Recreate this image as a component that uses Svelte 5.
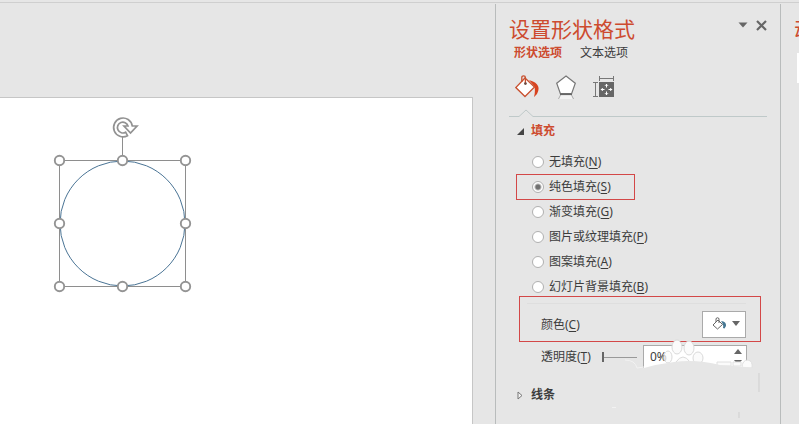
<script>
  const fills = [
    { id: 'none', name: '无填充', key: 'N' },
    { id: 'solid', name: '纯色填充', key: 'S' },
    { id: 'gradient', name: '渐变填充', key: 'G' },
    { id: 'picture', name: '图片或纹理填充', key: 'P' },
    { id: 'pattern', name: '图案填充', key: 'A' },
    { id: 'background', name: '幻灯片背景填充', key: 'B' }
  ];
  const handles = [[8, 42], [71, 42], [134, 42], [8, 105], [134, 105], [8, 168], [71, 168], [134, 168]];
  let fill = $state('solid');
  let transparency = $state(0);
</script>

<div class="app">
  <div class="ribbon-edge"></div>
  <main class="workspace">
    <div class="slide">
      <svg class="shape" width="144" height="178" viewBox="0 0 144 178" role="img" aria-label="椭圆">
        <circle cx="71.5" cy="105.5" r="62.5" fill="#fff" stroke="#4a7495" />
        <path d="M8.5 42.5H134.5V168.5H8.5ZM71.5 42V19" fill="none" stroke="#8e8e8e" />
        {#each handles as [x, y]}
          <circle cx={x + 0.5} cy={y + 0.5} r="4.7" fill="#fff" stroke="#949494" stroke-width="1.9" />
        {/each}
        <path d="M81.3 8A9.4 9.4 0 1 0 76.5 17.7L74.6 14.2A5.4 5.4 0 1 1 77 8H73L79.5 15L86 8Z" fill="#fff" stroke="#929292" stroke-width="1.7" />
      </svg>
    </div>
  </main>

  <aside class="panel">
    <header>
      <h1>设置形状格式</h1>
      <button class="plain" aria-label="任务窗格选项">
        <svg width="10" height="6" viewBox="0 0 10 6"><path d="M0.5 0.5H9.5L5 5.5Z" fill="#666" /></svg>
      </button>
      <button class="plain" aria-label="关闭">
        <svg width="11" height="11" viewBox="0 0 11 11"><path d="M1 1L10 10M10 1L1 10" stroke="#666" stroke-width="2.2" /></svg>
      </button>
    </header>
    <nav class="tabs">
      <button class="plain active">形状选项</button>
      <button class="plain">文本选项</button>
    </nav>
    <div class="categories">
      <button class="plain" aria-label="填充与线条">
        <svg width="24" height="24" viewBox="0 0 24 24">
          <path d="M10 3L19.5 12L10 21.5L0.8 12.5Z" fill="#fff" stroke="#c8502f" stroke-width="1.3" />
          <path d="M6.8 7V2.5Q6.8 0.8 8.6 0.8Q10.4 0.8 10.4 2.5V8" fill="none" stroke="#c8502f" stroke-width="1.3" />
          <circle cx="10.4" cy="8.6" r="1.4" fill="#6b4a42" />
          <path d="M14 5Q21.5 7 23 11Q24.5 14.5 22 19L19 22Q20.5 17 19.5 11.5Z" fill="#d8431f" />
        </svg>
      </button>
      <button class="plain" aria-label="效果">
        <svg width="22" height="24" viewBox="0 0 22 24">
          <path d="M5 20H17L18 24H4Z" fill="#f3f3f3" />
          <path d="M11 1L20.3 8.2L16.7 18.5H5.3L1.7 8.2Z" fill="#fff" stroke="#777" stroke-width="1.2" />
          <path d="M5 19.3H17" stroke="#666" stroke-width="1.6" />
          <path d="M5.5 20L3.5 24M16.5 20L18.5 24" stroke="#aaa" />
        </svg>
      </button>
      <button class="plain" aria-label="大小与属性">
        <svg width="22" height="24" viewBox="0 0 22 24">
          <path d="M6.5 1V6M20.5 1V6M6.5 3.5H20.5M0 7.5H5M0 21.5H5M2.5 7.5V21.5" fill="none" stroke="#777" />
          <rect x="6" y="7" width="15" height="15" fill="#666" />
          <path d="M13.5 9V12.5M13.5 16.5V20M8 14.5H11.5M15.5 14.5H19" stroke="#fff" />
          <path d="M12 10.8L13.5 9.3L15 10.8M12 18.2L13.5 19.7L15 18.2M9.8 13L8.3 14.5L9.8 16M17.2 13L18.7 14.5L17.2 16" fill="none" stroke="#fff" />
        </svg>
      </button>
    </div>
    <div class="divider">
      <svg width="24" height="9" viewBox="0 0 24 9"><path d="M0 8.5H10L17 2L24 8.5" fill="none" stroke="#bfc9c9" /></svg>
      <span></span>
    </div>

    <section>
      <h2>
        <button class="plain section-title open" aria-expanded="true">
          <svg width="7" height="7" viewBox="0 0 7 7"><path d="M7 0V7H0Z" fill="#444" /></svg>填充
        </button>
      </h2>
      <div class="fills" role="radiogroup" aria-label="填充">
        {#each fills as f}
          <div class="fill-row" class:marked={f.id === 'solid'}>
            <label><input type="radio" name="fill" value={f.id} bind:group={fill} /><span>{f.name}(<u>{f.key}</u>)</span></label>
          </div>
        {/each}
      </div>
      <div class="color-row">
        <label for="color">颜色(<u>C</u>)</label>
        <button id="color" class="color">
          <svg width="15" height="14" viewBox="0 0 15 14">
            <path d="M6 3L10.5 7.5L5.5 12L1 8Z" fill="#fff" stroke="#666" />
            <path d="M4 5V1.5Q5.5 0 7 1.5V6" fill="none" stroke="#666" />
            <path d="M9 4Q14.5 4.5 14 9L12.5 11.5L11 11Q12 8 9 4Z" fill="#467792" />
          </svg>
          <svg width="8" height="5" viewBox="0 0 8 5"><path d="M0 0H8L4 5Z" fill="#666" /></svg>
        </button>
      </div>
      <div class="trans-row">
        <label for="transparency">透明度(<u>T</u>)</label>
        <input type="range" min="0" max="100" bind:value={transparency} aria-label="透明度滑块" />
        <div class="spinner">
          <input id="transparency" type="text" value="{transparency}%" />
          <div class="steps">
            <button class="plain" aria-label="增加" onclick={() => (transparency = Math.min(100, transparency + 1))}>
              <svg width="8" height="5" viewBox="0 0 8 5"><path d="M0 5H8L4 0Z" fill="#666" /></svg>
            </button>
            <button class="plain" aria-label="减少" onclick={() => (transparency = Math.max(0, transparency - 1))}>
              <svg width="8" height="5" viewBox="0 0 8 5"><path d="M0 0H8L4 5Z" fill="#666" /></svg>
            </button>
          </div>
        </div>
        <svg class="watermark" width="152" height="84" viewBox="0 0 152 84" aria-hidden="true">
          <g fill="#fbfbfb" stroke="#dadada">
            <ellipse cx="69" cy="9" rx="5" ry="7" />
            <ellipse cx="81" cy="10" rx="5" ry="7" />
            <ellipse cx="60" cy="19" rx="4" ry="6" fill-opacity="0.7" />
            <ellipse cx="90" cy="20" rx="5" ry="6" />
            <path d="M68 24Q75 14 82 24" />
          </g>
          <path d="M109 24H123V28H109ZM125 24H133V28H125ZM134 30Q134 22 140 22Q145 23 144 30Z" fill="#fbfbfb" stroke="#e0e0e0" />
          <path d="M8 30L36 30Q50 26 66 24Q88 21 112 27L150 30V64H8Z" fill="#e6e6e6" />
          <path d="M17 22Q27 22 29 30L36 29" fill="none" stroke="#f2f2f2" />
          <path d="M151 35V54M131 74V80" stroke="#cfcfcf" />
          <path d="M4 69.5H8" stroke="#f2f2f2" />
        </svg>
      </div>
    </section>
    <section>
      <h2 class="line">
        <button class="plain section-title" aria-expanded="false">
          <svg width="7" height="9" viewBox="0 0 7 9"><path d="M1 1L5 4.5L1 8Z" fill="#f4f4f4" stroke="#777" /></svg>线条
        </button>
      </h2>
    </section>
  </aside>

  <aside class="next">
    <h1>动</h1>
    <div class="card"></div>
  </aside>
</div>

<style>
  :global(body) { background: #e6e6e6; }
  .app {
    display: grid;
    grid-template: 4px 1fr / minmax(0, 1fr) 285px 19px;
    height: 100vh;
    overflow: hidden;
    background: #e6e6e6;
    color: #3c3c3c;
    font: 12px/20px "Noto Sans", "Noto Sans CJK SC", sans-serif;
  }
  .ribbon-edge { grid-column: 1 / -1; height: 2px; border-bottom: 1px solid #cfcfcf; }
  .workspace { display: flex; padding: 93px 22px 0 0; }
  .slide {
    position: relative;
    flex: 1;
    background: #fff;
    border: solid #c6c6c6;
    border-width: 1px 1px 0 0;
  }
  .shape { position: absolute; left: 51px; top: 20px; overflow: visible; }
  .panel { border-left: 1px solid #b9bcbc; padding: 13px 13px 0; }
  h1, h2 { margin: 0; font-weight: 400; }
  h1 { flex: 1; font-size: 21px; line-height: 24px; color: #cd4b2f; white-space: nowrap; }
  .plain { padding: 0; border: 0; background: none; color: inherit; font: inherit; }
  svg { display: block; }
  header { display: flex; gap: 8px; }
  header .plain { height: 16px; display: flex; align-items: center; }
  .tabs { display: flex; gap: 18px; margin: 3px 0 13px 5px; line-height: 18px; }
  .tabs .active { color: #cd4b2f; font-weight: 700; }
  .categories { display: flex; gap: 16px; margin-left: 6px; }
  .divider { display: flex; align-items: flex-end; margin-top: 9px; }
  .divider span { flex: 1; border-bottom: 1px solid #bfc9c9; }
  h2 { margin-top: 4px; font-size: 12px; }
  h2.line { margin-top: 16px; }
  .section-title { display: flex; align-items: center; gap: 7px; margin-left: 8px; font-weight: 700; }
  .open { color: #cd4b2f; }
  .fills { margin-top: 8px; padding-left: 23px; }
  .fill-row { position: relative; height: 25px; display: flex; align-items: center; }
  .fill-row label { display: flex; align-items: center; gap: 5px; }
  .marked::after {
    content: "";
    position: absolute;
    left: -16px;
    top: 0;
    width: 117px;
    height: 24px;
    border: 1px solid #d34848;
    pointer-events: none;
  }
  u { text-underline-offset: 2px; }
  input[type="radio"] {
    appearance: none;
    width: 12px;
    height: 12px;
    margin: 0;
    border: 1px solid #b0b0b0;
    border-radius: 50%;
    background: #fff;
  }
  input[type="radio"]:checked { background: radial-gradient(circle, #707070 0 2px, #fff 4px); }
  .color-row {
    position: relative;
    display: flex;
    align-items: center;
    justify-content: space-between;
    margin-top: 12px;
    padding: 0 21px 0 32px;
  }
  .color-row::before {
    content: "";
    position: absolute;
    inset: -8px 21px auto 18px;
    border-top: 1px solid #dedede;
  }
  .color-row::after {
    content: "";
    position: absolute;
    inset: -15px 6px -4px 10px;
    border: 1px solid #d34848;
    pointer-events: none;
  }
  .color {
    display: flex;
    align-items: center;
    justify-content: center;
    gap: 5px;
    width: 44px;
    height: 27px;
    padding: 0 0 2px 3px;
    border: 1px solid #aaa;
    background: #fff;
  }
  .trans-row {
    position: relative;
    display: flex;
    align-items: center;
    height: 24px;
    margin-top: 7px;
    padding: 0 20px 0 32px;
  }
  .trans-row label { flex: 1; }
  input[type="range"] {
    appearance: none;
    width: 35px;
    height: 10px;
    margin: 0 6px 0 0;
    background: linear-gradient(#999, #999) center / 100% 1px no-repeat;
  }
  input[type="range"]::-webkit-slider-thumb { appearance: none; width: 2px; height: 10px; background: #666; }
  .spinner { display: flex; width: 102px; height: 22px; border: 1px solid #aaa; background: #fff; }
  .spinner input {
    flex: 1;
    min-width: 0;
    padding: 0 0 0 6px;
    border: 0;
    background: none;
    color: inherit;
    font: inherit;
  }
  .steps { display: flex; flex-direction: column; justify-content: space-around; padding-right: 4px; }
  .watermark { position: absolute; left: 99px; top: -7px; pointer-events: none; }
  .next { border-left: 1px solid #b9bcbc; padding: 13px 0 0 13px; overflow: hidden; }
  .card { height: 30px; margin: 12px 0 0 3px; background: #fff; }
</style>
